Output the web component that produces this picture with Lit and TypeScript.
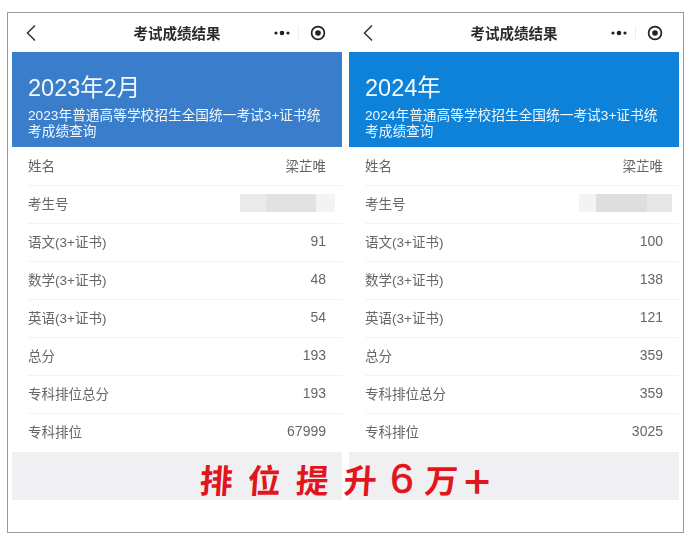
import { LitElement, html, css } from "lit";
import { customElement } from "lit/decorators.js";

interface Sheet { title: string; sub: string; color: string; mask: [number, string][]; values: string[]; }

const LABELS = ["姓名", "考生号", "语文(3+证书)", "数学(3+证书)", "英语(3+证书)", "总分", "专科排位总分", "专科排位"];

const SHEETS: Sheet[] = [
  { title: "2023年2月", sub: "2023年普通高等学校招生全国统一考试3+证书统考成绩查询", color: "#3a7ecb",
    mask: [[26, "#eaeaea"], [50, "#e2e2e2"], [19, "#f3f3f3"]],
    values: ["梁芷唯", "", "91", "48", "54", "193", "193", "67999"] },
  { title: "2024年", sub: "2024年普通高等学校招生全国统一考试3+证书统考成绩查询", color: "#0e82d8",
    mask: [[17, "#f3f3f3"], [51, "#dedede"], [25, "#e7e7e7"]],
    values: ["梁芷唯", "", "100", "138", "121", "359", "359", "3025"] },
];

const SLOGAN: [string, string][] = [
  ["排", ""], ["位", ""], ["提", ""], ["升", ""], ["6", "six"], ["万", ""], ["+", "plus"],
];

@customElement("app-root")
export class AppRoot extends LitElement {
  static styles = css`
    :host {
      display: block;
      width: 694px;
      height: 550px;
      background: #fff;
      font-family: "Liberation Sans", "Noto Sans CJK SC", sans-serif;
      overflow: hidden;
    }
    .page { padding: 12px 0 0 7px; }
    .frame {
      position: relative;
      box-sizing: border-box;
      width: 677px;
      height: 521px;
      border: 1px solid #999;
      padding: 0 4px;
      display: flex;
      gap: 7px;
    }
    .panel { width: 330px; flex: none; filter: blur(0.35px); }
    .nav {
      height: 39px;
      box-sizing: border-box;
      padding-bottom: 1px;
      display: flex;
      align-items: center;
      position: relative;
      justify-content: center;
      color: #2b2b2b;
      font-size: 14.5px;
      font-weight: 700;
    }
    .back { position: absolute; left: 12px; top: 10px; width: 14px; height: 20px; }
    .caps { position: absolute; right: 16px; top: 6px; display: flex; align-items: center; height: 28px; }
    .dots { width: 16px; height: 8px; display: block; }
    .sep { width: 1px; height: 15px; background: #eee; margin: 0 11px 0 8px; }
    .rec { width: 16px; height: 16px; display: block; }
    .banner {
      height: 95px;
      box-sizing: border-box;
      padding: 23px 16px 0;
      color: #f2f8fd;
    }
    .title { font-size: 23.5px; line-height: 27px; }
    .sub { font-size: 13.7px; line-height: 16px; margin-top: 6px; }
    .rows { padding-top: 1px; }
    .row {
      height: 38px;
      box-sizing: border-box;
      margin-left: 16px;
      padding: 0 16px 3px 0;
      display: flex;
      align-items: center;
      justify-content: space-between;
      border-bottom: 1px solid #f3f3f3;
      font-size: 13.5px;
      color: #666;
    }
    .row:last-child { border-bottom-color: transparent; }
    .num { font-size: 14px; }
    .mask { display: flex; height: 18px; margin-right: -9px; }
    .mask i { display: block; height: 100%; }
    .foot { height: 48px; background: #f0f0f2; }
    .slogan {
      position: absolute;
      left: 192px;
      top: 447px;
      display: flex;
      gap: 15px;
      align-items: center;
      height: 38px;
      color: #e2141c;
      font-family: "Noto Sans CJK SC", sans-serif;
      font-weight: 700;
      font-size: 33px;
      line-height: 38px;
    }
    .slogan span { display: block; width: 33px; text-align: center; transform: skewX(-4deg); }
    .slogan .six {
      width: 24px;
      margin: 0 -4px 0 -2px;
      font-family: "Liberation Sans", sans-serif;
      font-size: 42px;
      font-weight: 400;
      -webkit-text-stroke: 0.6px #e2141c;
      transform: none;
    }
    .slogan .plus { width: 26px; margin-left: -9px; font-size: 46px; font-weight: 500; transform: none; }
  `;

  private panel(s: Sheet) {
    return html`<section class="panel">
      <div class="nav">
        <svg class="back" viewBox="0 0 14 20"><path d="M11 2.5 3.5 10 11 17.5" fill="none" stroke="#333" stroke-width="1.5"/></svg>
        考试成绩结果
        <div class="caps">
          <svg class="dots" viewBox="0 0 16 8"><circle cx="2" cy="4" r="1.6" fill="#222"/><circle cx="8" cy="4" r="2.3" fill="#222"/><circle cx="14" cy="4" r="1.6" fill="#222"/></svg>
          <span class="sep"></span>
          <svg class="rec" viewBox="0 0 16 16"><circle cx="8" cy="8" r="6.4" fill="none" stroke="#222" stroke-width="1.7"/><circle cx="8" cy="8" r="2.8" fill="#222"/></svg>
        </div>
      </div>
      <div class="banner" style="background:${s.color}">
        <div class="title">${s.title}</div>
        <div class="sub">${s.sub}</div>
      </div>
      <div class="rows">
        ${LABELS.map((l, i) => html`<div class="row">
          <span>${l}</span>
          ${i === 1
            ? html`<div class="mask">${s.mask.map(([w, c]) => html`<i style="width:${w}px;background:${c}"></i>`)}</div>`
            : html`<span class=${i === 0 ? "" : "num"}>${s.values[i]}</span>`}
        </div>`)}
      </div>
      <div class="foot"></div>
    </section>`;
  }

  render() {
    return html`<div class="page"><div class="frame">
      ${SHEETS.map((s) => this.panel(s))}
      <div class="slogan">${SLOGAN.map(([c, k]) => html`<span class=${k}>${c}</span>`)}</div>
    </div></div>`;
  }
}
